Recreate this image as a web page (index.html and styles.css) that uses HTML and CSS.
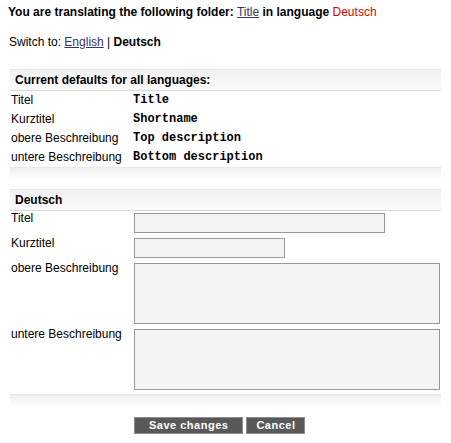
FILE: index.html
```html
<!DOCTYPE html>
<html lang="de">
<head>
    <meta charset="UTF-8">
    <title>Translate folder</title>
    <link rel="stylesheet" href="styles.css">
</head>
<body>

    <p class="intro"><b>You are translating the following folder:</b> <a href="#">Title</a> <b>in language</b> <span class="lang">Deutsch</span></p>
    <p class="switch">Switch to: <a href="#">English</a> | <b>Deutsch</b></p>

    <!-- Defaults -->
    <div class="panel defaults">
        <div class="panel-head">Current defaults for all languages:</div>
        <div class="fields">
            <div class="label">Titel</div><div class="value">Title</div>
            <div class="label">Kurztitel</div><div class="value">Shortname</div>
            <div class="label">obere Beschreibung</div><div class="value">Top description</div>
            <div class="label">untere Beschreibung</div><div class="value">Bottom description</div>
        </div>
        <div class="panel-foot"></div>
    </div>

    <!-- Translation form -->
    <form class="translate" action="#">
        <div class="panel">
            <div class="panel-head">Deutsch</div>
            <div class="fields form-fields">
                <label for="f-title">Titel</label>
                <input id="f-title" type="text" class="input-title">
                <label for="f-short">Kurztitel</label>
                <input id="f-short" type="text" class="input-short">
                <label for="f-top">obere Beschreibung</label>
                <textarea id="f-top"></textarea>
                <label for="f-bottom">untere Beschreibung</label>
                <textarea id="f-bottom"></textarea>
            </div>
            <div class="panel-foot"></div>
        </div>

        <div class="actions">
            <button type="submit" class="btn btn-save">Save changes</button>
            <button type="button" class="btn btn-cancel">Cancel</button>
        </div>
    </form>

</body>
</html>
```

FILE: styles.css
```css
/* --- page --- */
body {
    margin: 0;
    padding: 5px 8px;
    font-family: "Liberation Sans", Arial, sans-serif;
    font-size: 12px;
    color: #000;
    background: #fff;
}

a {
    color: #333366;
}

.intro {
    margin: 0;
    line-height: 14px;
}

.intro .lang {
    color: #e00000;
}

.switch {
    margin: 16px 0 0 1px;
    line-height: 14px;
}

/* --- panels --- */
.panel {
    margin: 0 2px;
}

.defaults {
    margin-top: 20px;
}

.translate .panel {
    margin-top: 10px;
}

.panel-head {
    height: 20px;
    line-height: 20px;
    padding-left: 5px;
    font-weight: bold;
    border-top: 1px solid #e6e6e6;
    border-bottom: 1px solid #dadada;
    background: linear-gradient(#f0f0f0, #fbfbfb);
}

.panel-foot {
    height: 11px;
    border-top: 1px solid #e8e8e8;
    background: linear-gradient(#efefef, #fff);
}

/* --- rows --- */
.fields {
    display: grid;
    grid-template-columns: 123px 1fr;
    line-height: 19px;
}

.fields .label {
    padding-left: 1px;
}

.fields .value {
    font-family: "Liberation Mono", "Courier New", monospace;
    font-weight: bold;
}

.form-fields {
    grid-template-columns: 124px 1fr;
    row-gap: 5px;
    padding: 2px 0 4px;
    line-height: 11px;
}

.form-fields label {
    padding-left: 1px;
}

.form-fields input,
.form-fields textarea {
    display: block;
    box-sizing: border-box;
    margin: 0;
    padding: 0 2px;
    border: 1px solid #999;
    background: #f4f4f4;
    font: 12px "Liberation Sans", Arial, sans-serif;
}

.form-fields input {
    height: 20px;
}

.input-title {
    width: 251px;
}

.input-short {
    width: 151px;
}

.form-fields textarea {
    width: 306px;
    height: 61px;
    resize: none;
}

/* --- buttons --- */
.actions {
    display: flex;
    gap: 3px;
    margin-top: 11px;
    padding-left: 126px;
}

.btn {
    height: 17px;
    margin: 0;
    border: 1px solid #8c8c8c;
    background: #595959;
    color: #fff;
    font: bold 11px "Liberation Sans", Arial, sans-serif;
    letter-spacing: 0.5px;
    line-height: 15px;
}

.btn-save {
    padding: 0 14px;
}

.btn-cancel {
    padding: 0 9px;
}
```
